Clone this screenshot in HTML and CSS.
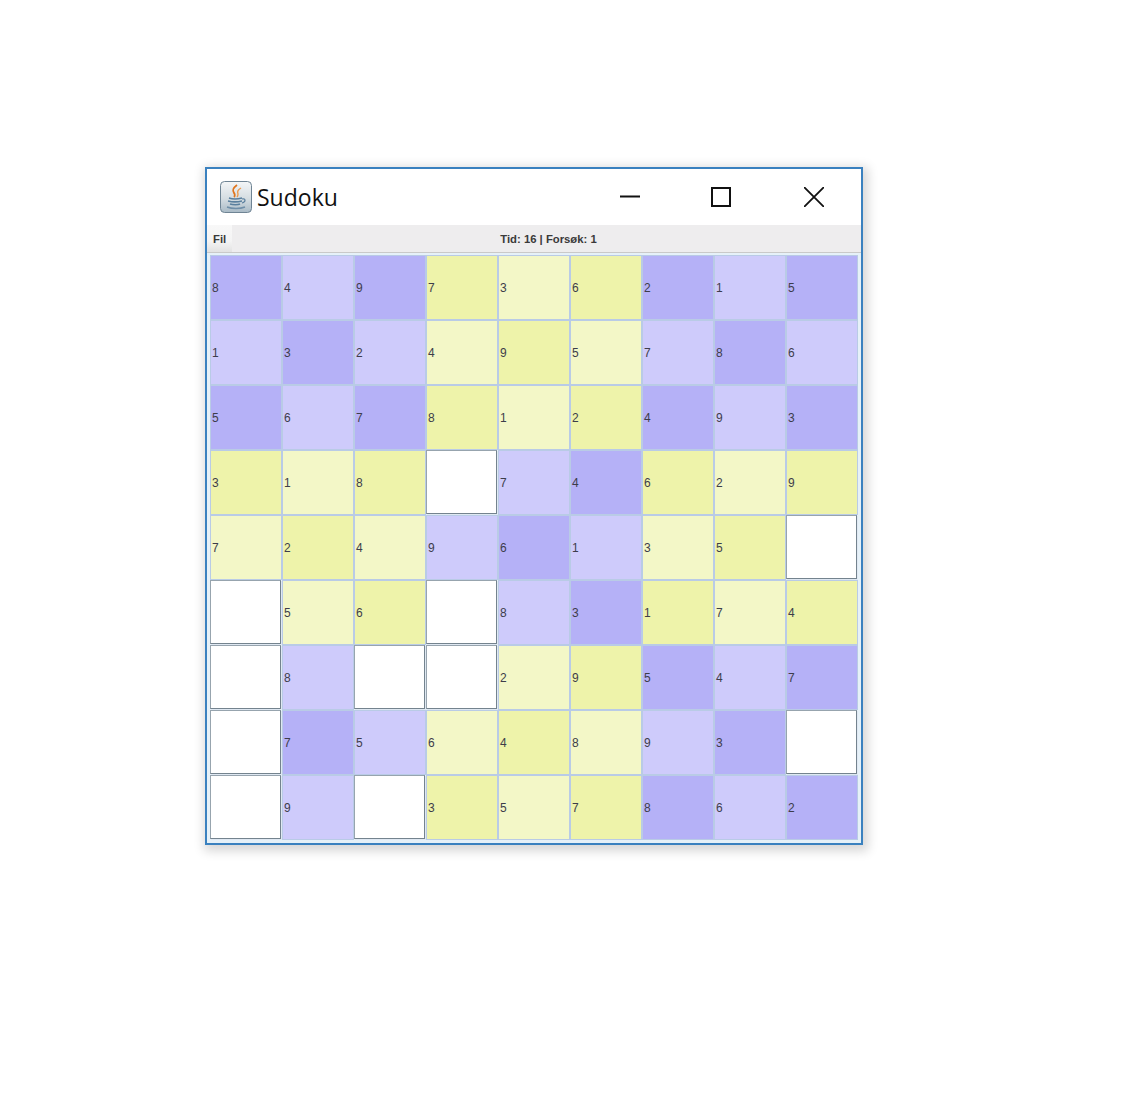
FILE: index.html
```html
<!DOCTYPE html>
<html lang="no">
<head>
  <meta charset="UTF-8">
  <title>Sudoku</title>
  <link rel="stylesheet" href="styles.css">
</head>
<body>

  <div class="window">
    <div class="titlebar">
      <svg class="app-icon" viewBox="0 0 32 32">
        <defs>
          <linearGradient id="iconBg" x1="0" y1="0" x2="0" y2="1">
            <stop offset="0" stop-color="#f4f6f7"/>
            <stop offset="0.55" stop-color="#d5dde2"/>
            <stop offset="1" stop-color="#a9bac6"/>
          </linearGradient>
        </defs>
        <rect x="0.5" y="0.5" width="31" height="31" rx="4" fill="url(#iconBg)" stroke="#6f8494"/>
        <path d="M17 4c-4 3-5 5-3 8 1 1 1 3 0 4" fill="none" stroke="#e0761f" stroke-width="1.8"/>
        <path d="M21 7c-3 2-4 3-3 6 0 1 0 2-1 3" fill="none" stroke="#ec9a4e" stroke-width="1.4"/>
        <path d="M9 17c3 1 9 1 13 0M8 20c4 1 10 1 14 0M10 23c3 1 8 1 10 0" fill="none" stroke="#5a7f9e" stroke-width="1.5"/>
        <path d="M22 18c4-1 4 3 0 4" fill="none" stroke="#5a7f9e" stroke-width="1.2"/>
        <path d="M7 26c5 2 13 2 18 0" fill="none" stroke="#6f8ea8" stroke-width="1.4"/>
      </svg>
      <span class="app-name">Sudoku</span>
      <div class="window-controls">
        <svg class="control minimize" viewBox="0 0 20 20"><path d="M0 9.5h20" stroke="#111" stroke-width="2"/></svg>
        <svg class="control" viewBox="0 0 20 20"><rect x="1" y="1" width="18" height="18" fill="none" stroke="#111" stroke-width="2"/></svg>
        <svg class="control" viewBox="0 0 20 20"><path d="M0 0l20 20M20 0L0 20" stroke="#111" stroke-width="1.8"/></svg>
      </div>
    </div>

    <div class="menubar">
      <span class="menu-item">Fil</span>
      <span class="status">Tid: 16 | Forsøk: 1</span>
    </div>

    <div class="board">
      <div class="cell lilac-dark">8</div><div class="cell lilac">4</div><div class="cell lilac-dark">9</div><div class="cell lime-dark">7</div><div class="cell lime">3</div><div class="cell lime-dark">6</div><div class="cell lilac-dark">2</div><div class="cell lilac">1</div><div class="cell lilac-dark">5</div>
      <div class="cell lilac">1</div><div class="cell lilac-dark">3</div><div class="cell lilac">2</div><div class="cell lime">4</div><div class="cell lime-dark">9</div><div class="cell lime">5</div><div class="cell lilac">7</div><div class="cell lilac-dark">8</div><div class="cell lilac">6</div>
      <div class="cell lilac-dark">5</div><div class="cell lilac">6</div><div class="cell lilac-dark">7</div><div class="cell lime-dark">8</div><div class="cell lime">1</div><div class="cell lime-dark">2</div><div class="cell lilac-dark">4</div><div class="cell lilac">9</div><div class="cell lilac-dark">3</div>

      <div class="cell lime-dark">3</div><div class="cell lime">1</div><div class="cell lime-dark">8</div><div class="cell empty"></div><div class="cell lilac">7</div><div class="cell lilac-dark">4</div><div class="cell lime-dark">6</div><div class="cell lime">2</div><div class="cell lime-dark">9</div>
      <div class="cell lime">7</div><div class="cell lime-dark">2</div><div class="cell lime">4</div><div class="cell lilac">9</div><div class="cell lilac-dark">6</div><div class="cell lilac">1</div><div class="cell lime">3</div><div class="cell lime-dark">5</div><div class="cell empty"></div>
      <div class="cell empty"></div><div class="cell lime">5</div><div class="cell lime-dark">6</div><div class="cell empty"></div><div class="cell lilac">8</div><div class="cell lilac-dark">3</div><div class="cell lime-dark">1</div><div class="cell lime">7</div><div class="cell lime-dark">4</div>

      <div class="cell empty"></div><div class="cell lilac">8</div><div class="cell empty"></div><div class="cell empty"></div><div class="cell lime">2</div><div class="cell lime-dark">9</div><div class="cell lilac-dark">5</div><div class="cell lilac">4</div><div class="cell lilac-dark">7</div>
      <div class="cell empty"></div><div class="cell lilac-dark">7</div><div class="cell lilac">5</div><div class="cell lime">6</div><div class="cell lime-dark">4</div><div class="cell lime">8</div><div class="cell lilac">9</div><div class="cell lilac-dark">3</div><div class="cell empty"></div>
      <div class="cell empty"></div><div class="cell lilac">9</div><div class="cell empty"></div><div class="cell lime-dark">3</div><div class="cell lime">5</div><div class="cell lime-dark">7</div><div class="cell lilac-dark">8</div><div class="cell lilac">6</div><div class="cell lilac-dark">2</div>
    </div>
  </div>

</body>
</html>
```

FILE: styles.css
```css
body {
  margin: 0;
  padding: 167px 0 0 205px;
  background-color: #fff;
  font-family: "Liberation Sans", Arial, sans-serif;
  height: 928px;
}

.window {
  box-sizing: border-box;
  width: 658px;
  height: 678px;
  border: 2px solid #3a81bf;
  background-color: #e6f1f8;
  box-shadow: 2px 3px 10px 3px rgba(0, 0, 0, 0.16);
}

.titlebar {
  display: flex;
  align-items: center;
  height: 56px;
  padding-left: 13px;
  background-color: #fff;
}

.app-icon {
  width: 32px;
  height: 32px;
  margin-right: 5px;
}

.app-name {
  font-family: "Open Sans", sans-serif;
  font-size: 23px;
  color: #111;
}

.window-controls {
  display: flex;
  margin-left: auto;
  margin-right: 37px;
  gap: 73px;
}

.control {
  width: 20px;
  height: 20px;
}

.minimize {
  margin-right: -2px;
}

.menubar {
  display: flex;
  align-items: center;
  height: 28px;
  background-color: #eeedee;
  border-bottom: 1px solid #c9c9c9;
  box-sizing: border-box;
  font-size: 11.3px;
  font-weight: bold;
  color: #3a3a3a;
}

.menu-item {
  display: flex;
  align-items: center;
  align-self: stretch;
  width: 25px;
  padding-left: 6px;
  box-sizing: border-box;
  background: linear-gradient(#f8f8f8, #f4f4f4 60%, #e2e2e2);
}

.status {
  flex: 1;
  text-align: center;
  padding-left: 4px;
}

.board {
  display: grid;
  grid-template-columns: repeat(9, 72px);
  grid-template-rows: repeat(9, 65px);
  padding: 2px 0 0 3px;
}

.cell {
  display: flex;
  align-items: center;
  box-sizing: border-box;
  padding-left: 1px;
  border: 1px solid #b9cbe6;
  font-size: 12px;
  color: #3d3d4a;
}

.lilac-dark {
  background-color: #b5b1f7;
}

.lilac {
  background-color: #cecbfb;
}

.lime-dark {
  background-color: #eef3aa;
}

.lime {
  background-color: #f3f7c7;
}

.empty {
  margin: 0 1px 1px 0;
  background-color: #fff;
  border-color: #97a4ae #74838e #74838e #97a4ae;
  box-shadow: 1px 1px 0 #dfe8f2;
}
```
